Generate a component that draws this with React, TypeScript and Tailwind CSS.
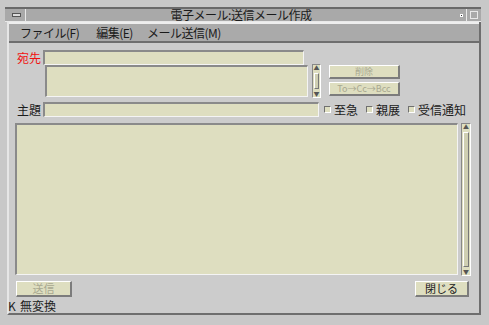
const font = { fontFamily: '"Noto Sans CJK JP", "DejaVu Sans", sans-serif' }

function Sunken({ className = '' }: { className?: string }) {
  return (
    <div
      className={`shrink-0 bg-[#dedec0] border-t-2 border-l-2 border-b border-r border-t-[#8a8a8a] border-l-[#8a8a8a] border-b-[#f4f4f4] border-r-[#f4f4f4] ${className}`}
    />
  )
}

function Btn({ children, className = '', dim = false }: { children: React.ReactNode; className?: string; dim?: boolean }) {
  return (
    <div
      className={`shrink-0 flex items-center justify-center whitespace-nowrap bg-[#dedec0] border-t border-l border-b-2 border-r-2 border-t-white border-l-white border-b-[#7c7c7c] border-r-[#7c7c7c] leading-none ${
        dim ? 'text-[#a8a890]' : 'text-[#202020]'
      } ${className}`}
    >
      {children}
    </div>
  )
}

function Check({ label }: { label: string }) {
  return (
    <div className="flex items-center gap-[3px] shrink-0 whitespace-nowrap">
      <div className="w-[7px] h-[7px] bg-[#dedec0] border border-t-[#707070] border-l-[#707070] border-b-white border-r-white" />
      <span className="text-[12px] leading-none text-[#202020]">{label}</span>
    </div>
  )
}

function VScroll({ className = '' }: { className?: string }) {
  return (
    <div className={`shrink-0 flex flex-col bg-[#dedec0] border border-t-[#888] border-l-[#888] border-b-white border-r-white ${className}`}>
      <div className="h-[7px] flex items-start justify-center text-[6px] leading-none text-[#555]">▲</div>
      <div className="flex-1 mx-[1px] my-[1px] bg-[#cfcfb2] border-t border-l border-b border-r border-t-white border-l-white border-b-[#777] border-r-[#777]" />
      <div className="h-[7px] flex items-end justify-center text-[6px] leading-none text-[#555]">▼</div>
    </div>
  )
}

export default function App() {
  return (
    <div className="w-[489px] h-[325px] bg-[#c8c8c8] overflow-hidden text-[#1c1c1c]" style={font}>
      <div className="pt-[7px] pl-[5px] pr-[8px]">
        {/* title bar */}
        <div className="h-[15px] flex items-center bg-[#a9a9a9] border-t-2 border-t-[#6a6a6a] border-b border-b-[#e8e8e8]">
          <div className="w-[20px] flex justify-center pl-[3px]">
            <div className="w-[9px] h-[4px] bg-[#dcdcdc] border border-[#555]" />
          </div>
          <div className="w-px self-stretch bg-[#e8e8e8]" />
          <div className="flex-1 text-center text-[12px] leading-none text-[#1a1a1a] tracking-[-0.5px] whitespace-nowrap">
            電子メール:送信メール作成
          </div>
          <div className="w-[10px] flex justify-center">
            <div className="w-[3px] h-[3px] bg-[#333] border border-white" />
          </div>
          <div className="w-px self-stretch bg-[#e8e8e8]" />
          <div className="w-[14px] flex justify-center">
            <div className="w-[8px] h-[8px] border border-[#e8e8e8]" />
          </div>
        </div>
        {/* window body */}
        <div className="border-l-2 border-l-[#e6e6e6] border-r-2 border-r-[#6e6e6e] border-b-2 border-b-[#6e6e6e] bg-[#cccccc] ml-[2px]">
          {/* menu bar */}
          <div className="h-[21px] flex items-center pl-[11px] bg-[#aaaaaa] border-t-2 border-t-[#eeeeee] border-b-2 border-b-[#6e6e6e] text-[12px] leading-none text-[#1a1a1a] tracking-[-0.5px] whitespace-nowrap">
            <span>ファイル(F)</span>
            <span className="ml-[17px]">編集(E)</span>
            <span className="ml-[14px]">メール送信(M)</span>
          </div>
          {/* form */}
          <div className="pl-[6px] pr-[8px] pt-[7px]">
            <div className="flex items-center h-[15px]">
              <span className="w-[28px] pl-[2px] text-[12px] leading-none text-[#f01010]">宛先</span>
              <Sunken className="w-[261px] h-[15px]" />
            </div>
            <div className="flex">
              <div className="w-[30px] shrink-0" />
              <Sunken className="w-[263px] h-[32px]" />
              <VScroll className="ml-[4px] w-[9px] h-[34px] -mt-[1px]" />
              <div className="ml-[8px] flex flex-col gap-[3px]">
                <Btn className="w-[71px] h-[14px] text-[9px]" dim>削除</Btn>
                <Btn className="w-[71px] h-[14px] text-[9px]" dim>To→Cc→Bcc</Btn>
              </div>
            </div>
            <div className="flex items-center h-[15px] mt-[4px]">
              <span className="w-[28px] pl-[2px] text-[12px] leading-none shrink-0">主題</span>
              <Sunken className="w-[276px] h-[15px]" />
              <div className="ml-[5px] flex items-center gap-[8px]">
                <Check label="至急" />
                <Check label="親展" />
                <Check label="受信通知" />
              </div>
            </div>
            <div className="flex mt-[6px]">
              <Sunken className="w-[443px] h-[152px]" />
              <VScroll className="ml-[3px] w-[10px] h-[153px]" />
            </div>
            <div className="flex justify-between mt-[5px] pl-[1px] pr-[2px] pb-[1px]">
              <Btn className="w-[56px] h-[16px] text-[11px]" dim>送信</Btn>
              <Btn className="w-[54px] h-[16px] text-[11px]">閉じる</Btn>
            </div>
          </div>
          {/* status */}
          <div className="h-[15px] flex items-center text-[12px] leading-none -ml-[2px]">
            <span className="w-[13px] pl-[1px]">K</span>
            <span>無変換</span>
          </div>
        </div>
      </div>
    </div>
  )
}
